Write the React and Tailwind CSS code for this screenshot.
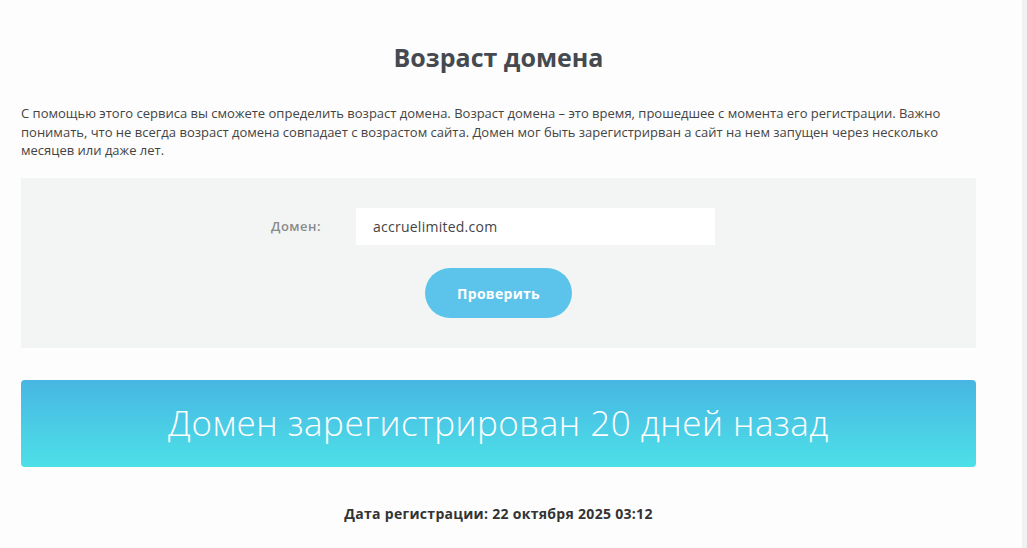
import React, { useState } from 'react';

const font = { fontFamily: '"Open Sans", "Noto Sans", sans-serif' };

export default function App() {
  const [domain, setDomain] = useState('accruelimited.com');

  return (
    <div className="flex min-h-[548px] w-full bg-white text-[#444]" style={font}>
      <div className="flex-1 bg-[#fdfdfd]">
        <div className="w-[955px] ml-[21px] pt-[40px]">
          {/* HEADER */}
          <h1 className="text-center text-[25px] font-bold text-[#454a50] leading-[34px]">
            Возраст домена
          </h1>

          <p className="mt-[30px] text-[13px] leading-[18.7px] text-[#444]">
            С помощью этого сервиса вы сможете определить возраст домена. Возраст домена – это время, прошедшее с момента его регистрации. Важно понимать, что не всегда возраст домена совпадает с возрастом сайта. Домен мог быть зарегистрирван а сайт на нем запущен через несколько месяцев или даже лет.
          </p>

          {/* FORM */}
          <div className="mt-[18px] h-[170px] bg-[#f3f5f5] flex flex-col items-center pt-[30px]">
            <div className="flex items-center mr-[11px]">
              <label className="w-[85px] text-[13px] font-semibold tracking-[0.5px] text-[#8a8a8a]">Домен:</label>
              <input
                value={domain}
                onChange={e => setDomain(e.target.value)}
                className="w-[359px] h-[37px] bg-white px-[17px] text-[14px] tracking-[0.25px] text-[#444] outline-none"
              />
            </div>
            <button className="mt-[23px] w-[147px] h-[50px] rounded-full bg-[#5cc4ea] text-white text-[14px] font-bold tracking-[0.3px]">
              Проверить
            </button>
          </div>

          {/* RESULT */}
          <div className="mt-[32px] h-[87px] rounded-[4px] bg-gradient-to-b from-[#48b6e3] to-[#4de0e7] flex items-center justify-center">
            <span className="text-white text-[35px] font-light tracking-[0.5px]">
              Домен зарегистрирован 20 дней назад
            </span>
          </div>

          <p className="mt-[36px] text-center text-[14px] font-bold tracking-[0.3px] text-[#333]">
            Дата регистрации: 22 октября 2025 03:12
          </p>
        </div>
      </div>
      <div className="w-[5px] bg-[#f1f1f1]" />
    </div>
  );
}
